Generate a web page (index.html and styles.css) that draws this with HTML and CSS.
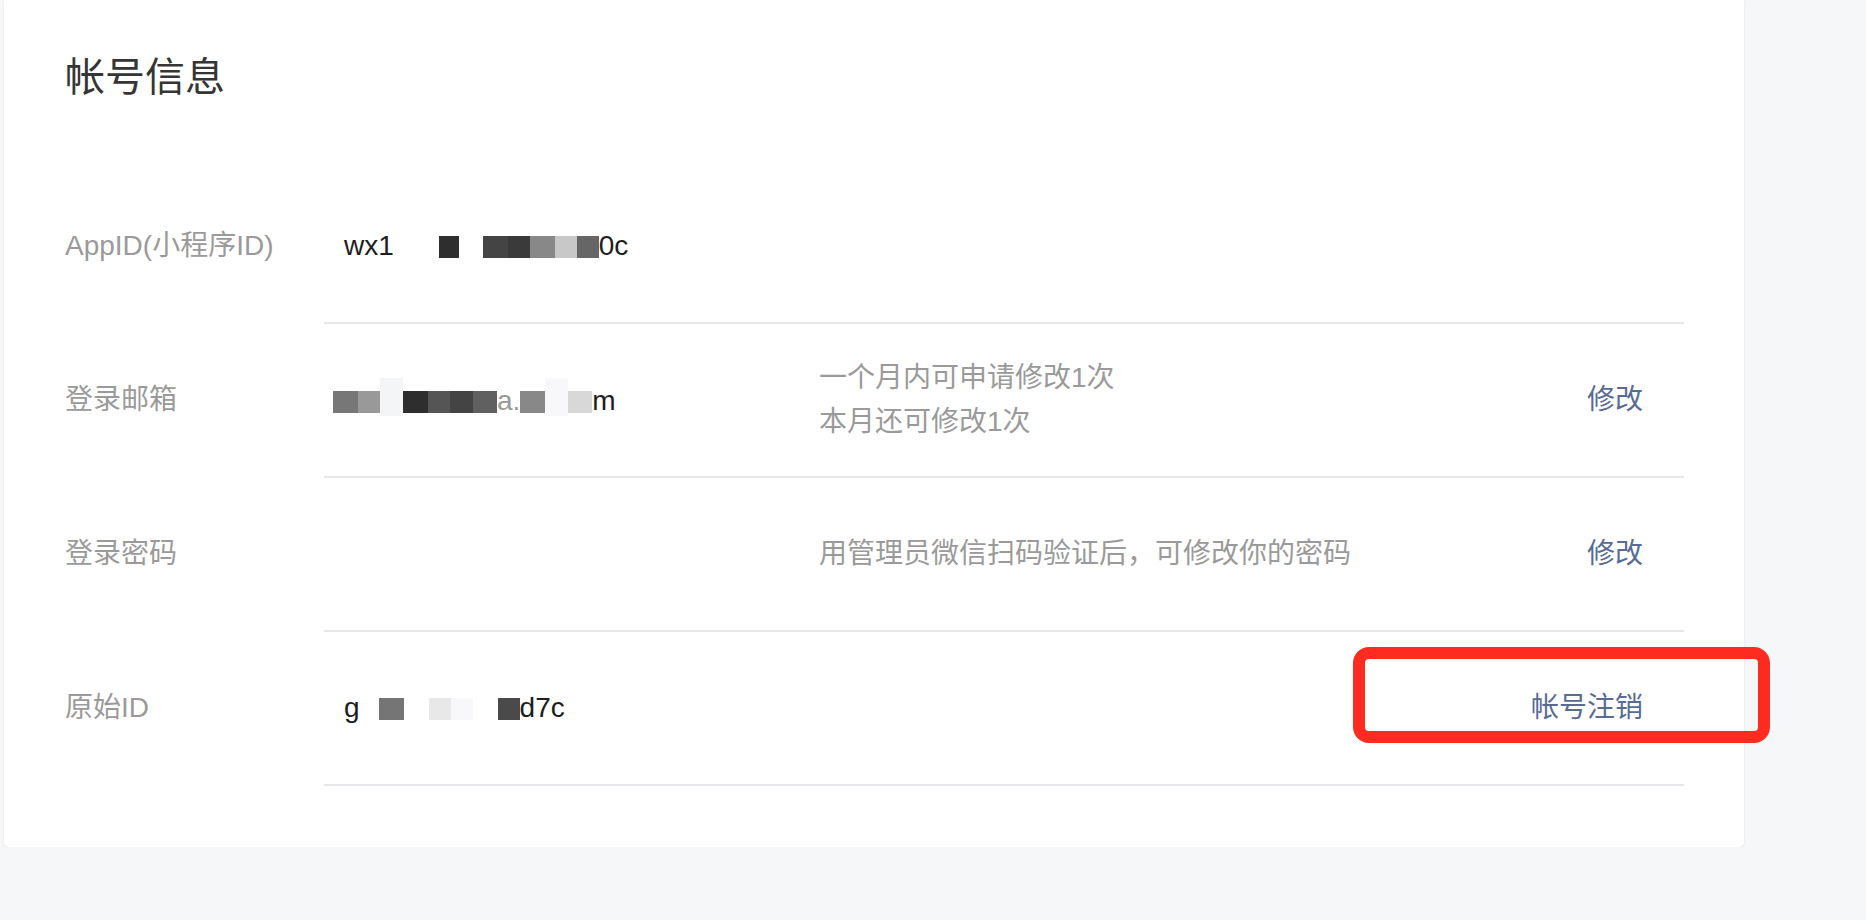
FILE: index.html
```html
<!DOCTYPE html>
<html lang="zh-CN">
<head>
<meta charset="utf-8">
<title>帐号信息</title>
<link rel="stylesheet" href="styles.css">
</head>
<body>
<div class="card">
  <h2 class="title">帐号信息</h2>

  <div class="row">
    <div class="label">AppID(小程序ID)</div>
    <div class="content">
      <div class="value">wx1<span class="gap w45"></span><span class="mz c2e w20"></span><span class="gap w24"></span><span class="mz c44 w25"></span><span class="mz c3a w22"></span><span class="mz c88 w25"></span><span class="mz cc8 w22"></span><span class="mz c66 w22"></span>0c</div>
      <div class="hint"></div>
    </div>
  </div>

  <div class="row">
    <div class="label">登录邮箱</div>
    <div class="content">
      <div class="value email"><span class="mz c77 w25"></span><span class="mz c99 w22"></span><span class="mz cf4 w23 tall"></span><span class="mz c2e w25"></span><span class="mz c55 w22"></span><span class="mz c44 w23"></span><span class="mz c60 w24"></span><span class="faint">a.</span><span class="mz c88 w25"></span><span class="mz cf8 w23 tall"></span><span class="mz cd8 w24"></span>m</div>
      <div class="hint">一个月内可申请修改1次<br>本月还可修改1次</div>
      <a class="action" href="#">修改</a>
    </div>
  </div>

  <div class="row">
    <div class="label">登录密码</div>
    <div class="content">
      <div class="value"></div>
      <div class="hint">用管理员微信扫码验证后，可修改你的密码</div>
      <a class="action" href="#">修改</a>
    </div>
  </div>

  <div class="row">
    <div class="label">原始ID</div>
    <div class="content">
      <div class="value">g<span class="gap w19"></span><span class="mz c75 w25"></span><span class="gap w25"></span><span class="mz ce8 w22"></span><span class="mz cf8 w22"></span><span class="gap w25"></span><span class="mz c4a w22"></span>d7c</div>
      <div class="hint"></div>
      <a class="action" href="#">帐号注销</a>
      <div class="highlight"></div>
    </div>
  </div>
</div>
</body>
</html>
```

FILE: styles.css
```css
html, body {
  margin: 0;
  padding: 0;
  background: #f6f7f9;
}

body {
  font-family: "Liberation Sans", "Noto Sans CJK SC", sans-serif;
  font-size: 28px;
  color: #353535;
}

.card {
  margin-left: 4px;
  width: 1740px;
  box-sizing: border-box;
  padding: 49px 60px 61px 61px;
  background: #fff;
  border-radius: 0 0 5px 5px;
  box-shadow: 0 1px 3px rgba(0, 0, 0, 0.08);
}

.title {
  margin: 0 0 65px;
  font-size: 40px;
  line-height: 56px;
  font-weight: normal;
  color: #353535;
}

.row {
  display: flex;
}

.label {
  width: 259px;
  flex: none;
  display: flex;
  align-items: center;
  padding-bottom: 2px;
  color: #9a9a9a;
  line-height: 44px;
}

.content {
  flex: 1;
  height: 152px;
  border-bottom: 2px solid #e7e7eb;
  display: flex;
  align-items: center;
  position: relative;
}

.value {
  width: 495px;
  flex: none;
  box-sizing: border-box;
  padding-left: 20px;
  color: #1e1e1e;
  line-height: 44px;
  white-space: nowrap;
}

.value.email {
  padding-left: 9px;
}

.hint {
  flex: 1;
  color: #9a9a9a;
  line-height: 44px;
}

.action {
  padding-right: 41px;
  color: #576b95;
  text-decoration: none;
  line-height: 44px;
}

.mz {
  display: inline-block;
  height: 22px;
  vertical-align: -3px;
}

.mz.tall {
  height: 38px;
  vertical-align: -6px;
}

.gap {
  display: inline-block;
}

.faint {
  color: #9a9a9a;
}

.w19 { width: 19px; }
.w20 { width: 20px; }
.w22 { width: 22px; }
.w23 { width: 23px; }
.w24 { width: 24px; }
.w25 { width: 25px; }
.w45 { width: 45px; }

.c2e { background: #2e2e2e; }
.c3a { background: #3a3a3a; }
.c44 { background: #444444; }
.c4a { background: #4a4a4a; }
.c55 { background: #555555; }
.c60 { background: #606060; }
.c66 { background: #666666; }
.c75 { background: #757575; }
.c77 { background: #777777; }
.c88 { background: #888888; }
.c99 { background: #999999; }
.cc8 { background: #c8c8c8; }
.cd8 { background: #d8d8d8; }
.ce8 { background: #e8e8e8; }
.cf4 { background: #f4f5f7; }
.cf8 { background: #f8f8fa; }

.highlight {
  position: absolute;
  left: 1029px;
  top: 15px;
  width: 417px;
  height: 96px;
  box-sizing: border-box;
  border: 12px solid #fd2b20;
  border-radius: 16px;
}
```
